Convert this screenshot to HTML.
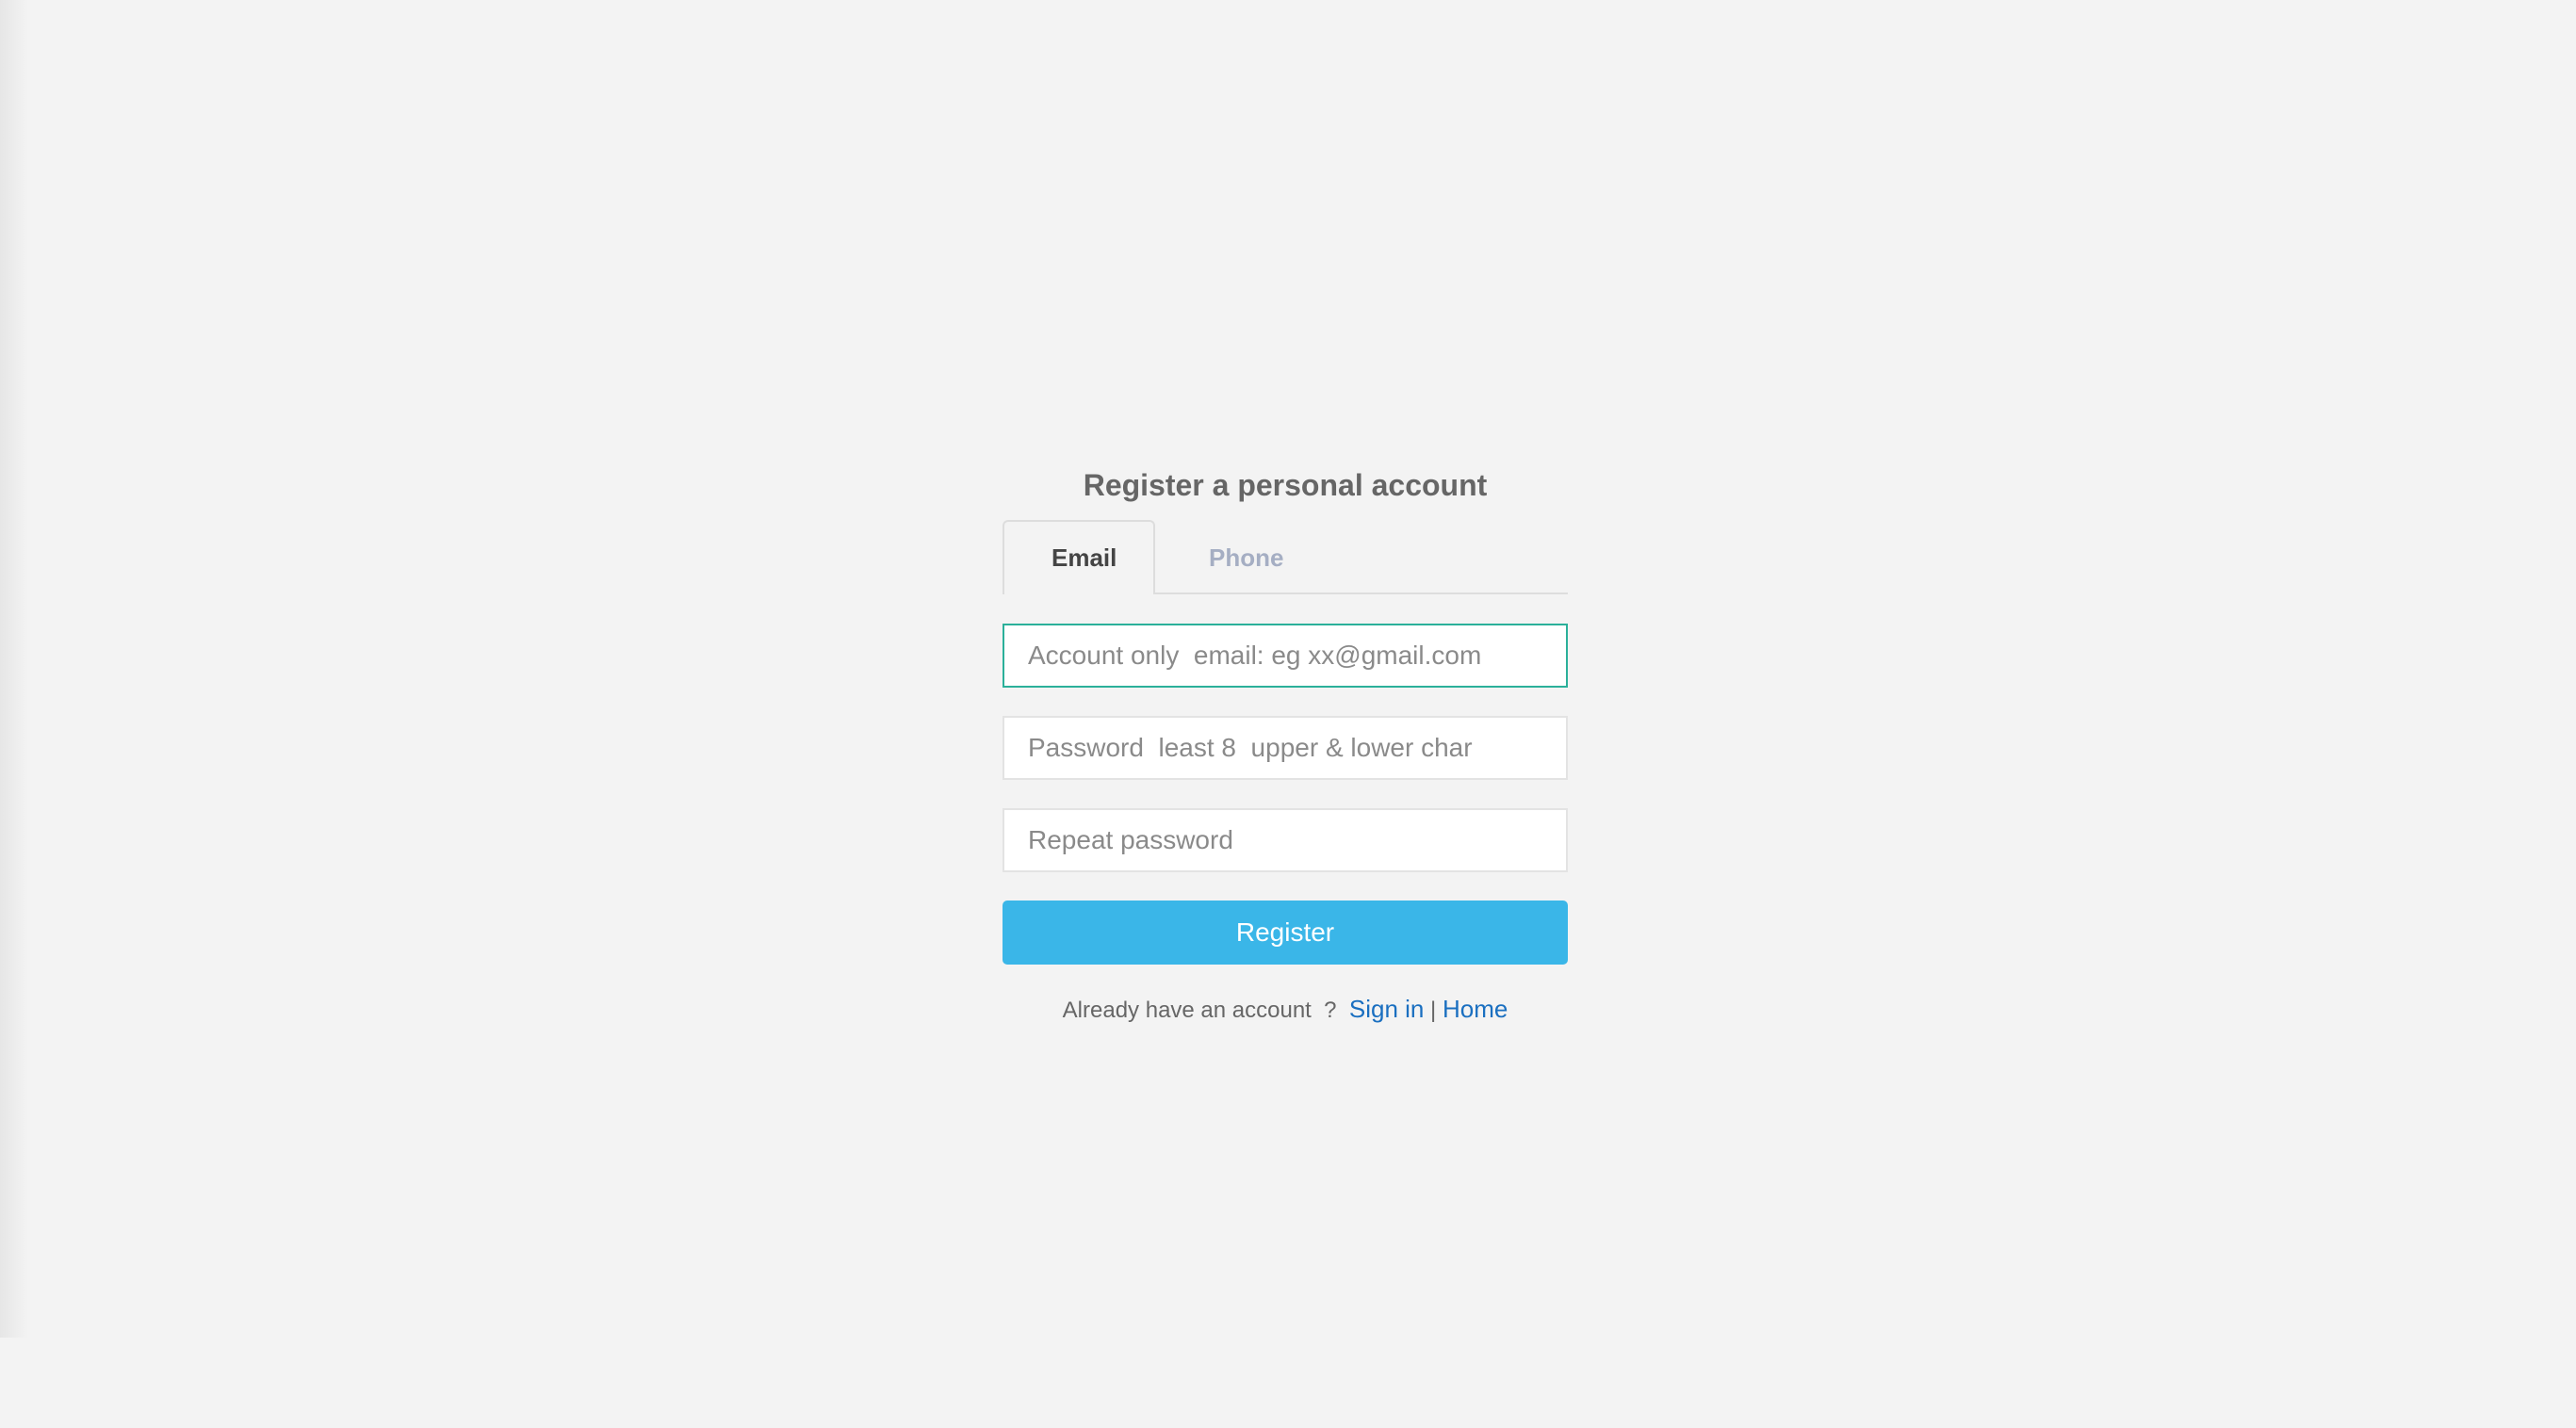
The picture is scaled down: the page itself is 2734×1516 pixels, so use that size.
<!DOCTYPE html>
<html><head><meta charset="utf-8"><style>
html,body{margin:0;padding:0}
body{width:2734px;height:1516px;background:#f3f3f3;font-family:"Liberation Sans",Arial,sans-serif;position:relative;overflow:hidden}
.shadow{position:absolute;left:0;top:0;width:30px;height:1420px;background:linear-gradient(to right,#e6e6e6,#f3f3f3)}
.title{position:absolute;left:1064px;width:600px;top:497px;text-align:center;font-size:32px;font-weight:bold;color:#666}
.tabline{position:absolute;left:1064px;width:600px;top:629px;height:2px;background:#ddd}
.tab{position:absolute;left:1064px;top:552px;width:162px;height:79px;border:2px solid #ddd;border-bottom:none;border-radius:6px 6px 0 0;background:#f3f3f3;box-sizing:border-box}
.t{position:absolute;top:577px;font-size:26px;font-weight:bold}
.inp{position:absolute;left:1064px;width:600px;height:68px;box-sizing:border-box;border:2px solid #e3e3e3;background:#fff;font-size:28px;color:#8a8a8a;padding-left:25px;line-height:64px}
.btn{position:absolute;left:1064px;width:600px;top:956px;height:68px;background:#3ab6e8;border-radius:5px;color:#fff;font-size:28px;text-align:center;line-height:68px}
.foot{position:absolute;left:1064px;width:600px;top:1056px;text-align:center;font-size:24px;color:#666}
.foot a{color:#1a6fc0;font-size:26px;text-decoration:none}
</style></head><body>
<div class="shadow"></div>
<div class="title">Register a personal account</div>
<div class="tabline"></div>
<div class="tab"></div>
<div class="t" style="left:1116px;color:#444">Email</div>
<div class="t" style="left:1283px;color:#a5aec3">Phone</div>
<div class="inp" style="top:662px;border-color:#2bb09a">Account only&nbsp; email: eg xx@gmail.com</div>
<div class="inp" style="top:760px">Password&nbsp; least 8&nbsp; upper &amp; lower char</div>
<div class="inp" style="top:858px">Repeat password</div>
<div class="btn">Register</div>
<div class="foot">Already have an account&nbsp; ?&nbsp; <a>Sign in</a> | <a>Home</a></div>
</body></html>
